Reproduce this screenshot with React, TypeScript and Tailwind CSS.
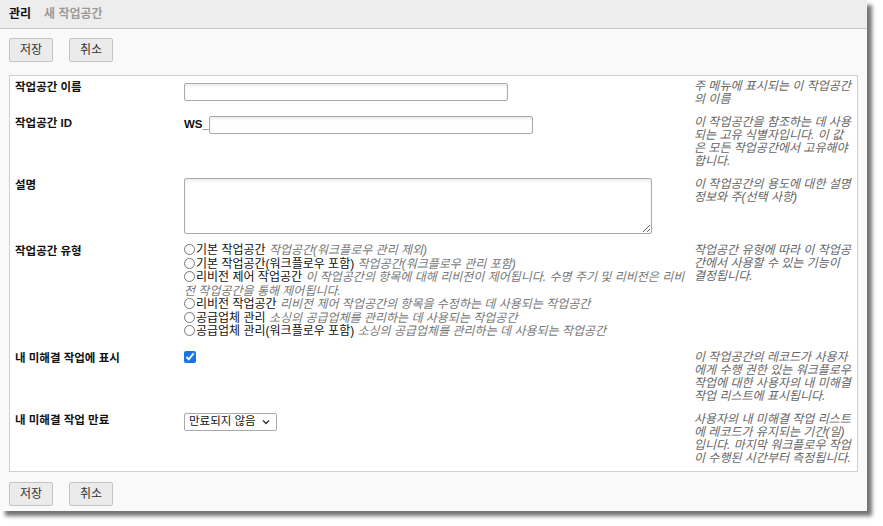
import React from 'react'

const font = { fontFamily: '"Liberation Sans", "Noto Sans CJK KR", sans-serif' }

const radios = [
  { title: '기본 작업공간', desc: '작업공간(워크플로우 관리 제외)' },
  { title: '기본 작업공간(워크플로우 포함)', desc: '작업공간(워크플로우 관리 포함)' },
  {
    title: '리비전 제어 작업공간',
    desc: '이 작업공간의 항목에 대해 리비전이 제어됩니다. 수명 주기 및 리비전은 리비전 작업공간을 통해 제어됩니다.',
  },
  { title: '리비전 작업공간', desc: '리비전 제어 작업공간의 항목을 수정하는 데 사용되는 작업공간' },
  { title: '공급업체 관리', desc: '소싱의 공급업체를 관리하는 데 사용되는 작업공간' },
  { title: '공급업체 관리(워크플로우 포함)', desc: '소싱의 공급업체를 관리하는 데 사용되는 작업공간' },
]

function Buttons() {
  return (
    <div className="flex gap-4">
      <button className="w-[44px] h-[24px] bg-[#ebebeb] border border-[#c4c4c4] rounded-[2px] text-[12px] text-[#333]">
        저장
      </button>
      <button className="w-[44px] h-[24px] bg-[#ebebeb] border border-[#c4c4c4] rounded-[2px] text-[12px] text-[#333]">
        취소
      </button>
    </div>
  )
}

function Row({ label, help, children }: { label: string; help: string; children: React.ReactNode }) {
  return (
    <div className="grid grid-cols-[169px_510px_1fr]">
      <div className="font-bold text-[11.5px] leading-[13px] text-[#111] pt-[1px]">{label}</div>
      <div>{children}</div>
      <div className="italic text-[12px] leading-[13px] text-[#666] pr-[3px]">{help}</div>
    </div>
  )
}

const inputCls =
  'h-[18px] bg-white border border-[#a9a9a9] rounded-[2px] shadow-[inset_0_2px_3px_rgba(0,0,0,0.08)] outline-none'

export default function App() {
  return (
    <div className="w-[883px] h-[526px] bg-white" style={font}>
      <div className="w-[867px] h-[511px] bg-[#f9f9f9] shadow-[5px_5px_4px_rgba(0,0,0,0.55)] flex flex-col">
        {/* Header */}
        <div className="h-[29px] bg-[#ededed] border-b border-[#c8c8c8] flex items-center gap-[13px] px-[9px] text-[12px] font-bold">
          <span className="text-[#111]">관리</span>
          <span className="text-[#9b9b9b]">새 작업공간</span>
        </div>

        <div className="px-[9px] pt-[9px]">
          <Buttons />
        </div>

        {/* Form panel */}
        <div className="mx-[9px] mt-[13px] h-[397px] bg-white border border-[#cfcfcf] pl-[5px] pt-[4px] flex flex-col gap-[10px]">
          <Row label="작업공간 이름" help="주 메뉴에 표시되는 이 작업공간의 이름">
            <input className={`${inputCls} w-[324px]`} />
          </Row>
          <Row
            label="작업공간 ID"
            help="이 작업공간을 참조하는 데 사용되는 고유 식별자입니다. 이 값은 모든 작업공간에서 고유해야 합니다."
          >
            <div className="flex items-center">
              <span className="font-bold text-[11.5px] text-[#111]">WS_</span>
              <input className={`${inputCls} w-[324px]`} />
            </div>
          </Row>
          <Row label="설명" help="이 작업공간의 용도에 대한 설명 정보와 주(선택 사항)">
            <textarea className="block w-[468px] h-[56px] bg-white border border-[#a9a9a9] rounded-[2px] shadow-[inset_0_2px_3px_rgba(0,0,0,0.08)] outline-none" />
          </Row>
          <Row label="작업공간 유형" help="작업공간 유형에 따라 이 작업공간에서 사용할 수 있는 기능이 결정됩니다.">
            <div className="text-[12px] leading-[13.5px] pr-[2px] pb-[2px]">
              {radios.map((r) => (
                <div key={r.title}>
                  <span className="inline-block w-[11px] h-[11px] rounded-full border border-[#777] align-[-1px] mr-[1px]" />
                  <span className="text-[#111]">{r.title}</span>{' '}
                  <span className="italic text-[#777]">{r.desc}</span>
                </div>
              ))}
            </div>
          </Row>
          <Row
            label="내 미해결 작업에 표시"
            help="이 작업공간의 레코드가 사용자에게 수행 권한 있는 워크플로우 작업에 대한 사용자의 내 미해결 작업 리스트에 표시됩니다."
          >
            <input type="checkbox" defaultChecked className="block w-[12px] h-[12px] m-0 accent-[#1a73e8]" />
          </Row>
          <Row
            label="내 미해결 작업 만료"
            help="사용자의 내 미해결 작업 리스트에 레코드가 유지되는 기간(일)입니다. 마지막 워크플로우 작업이 수행된 시간부터 측정됩니다."
          >
            <div className="w-[93px] h-[18px] bg-white border border-[#a9a9a9] rounded-[2px] flex items-center justify-between pl-[4px] pr-[6px] text-[11.5px] text-[#111]">
              <span>만료되지 않음</span>
              <svg width="8" height="6" viewBox="0 0 8 6">
                <path d="M1 1.5 L4 4.5 L7 1.5" fill="none" stroke="#333" strokeWidth="1.4" />
              </svg>
            </div>
          </Row>
        </div>

        <div className="px-[9px] pt-[10px]">
          <Buttons />
        </div>
      </div>
    </div>
  )
}
